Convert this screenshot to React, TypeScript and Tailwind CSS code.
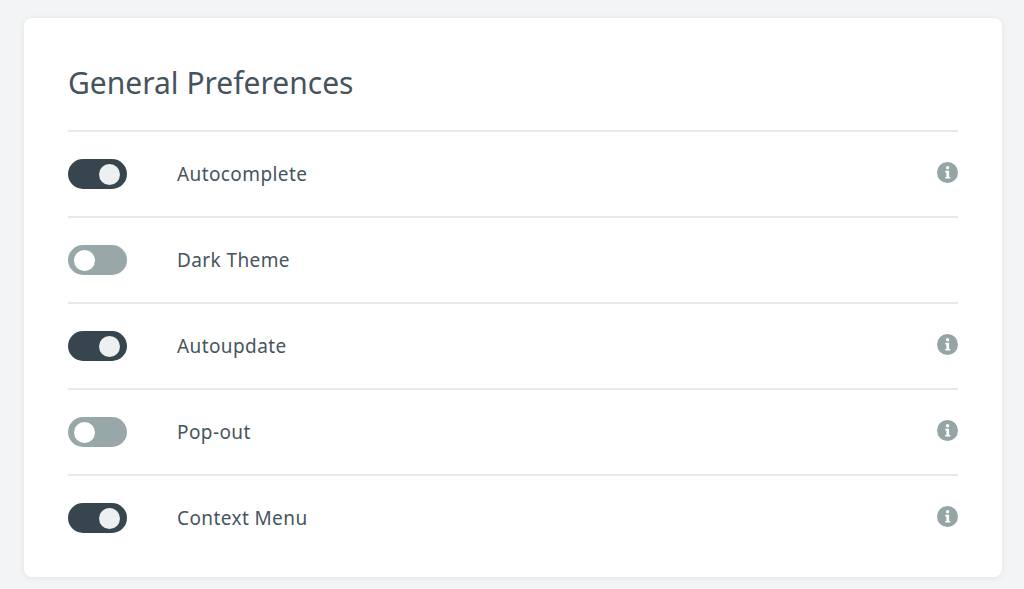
const rows = [
  { label: "Autocomplete", on: true, info: true },
  { label: "Dark Theme", on: false, info: false },
  { label: "Autoupdate", on: true, info: true },
  { label: "Pop-out", on: false, info: true },
  { label: "Context Menu", on: true, info: true },
];

function InfoIcon() {
  return (
    <svg width="21" height="21" viewBox="0 0 21 21" className="-mt-[4px]">
      <circle cx="10.5" cy="10.5" r="10.5" fill="#95a5a6" />
      <circle cx="10.6" cy="5.8" r="1.7" fill="#fff" />
      <path d="M8.2 8.7h3.9v6.2h1.2v1.7H8.2v-1.7h1.2v-4.5H8.2z" fill="#fff" />
    </svg>
  );
}

function Toggle({ on }: { on: boolean }) {
  return (
    <div
      className={`flex h-[30px] w-[59px] shrink-0 items-center rounded-full ${
        on ? "justify-end bg-[#37454e] pr-[7px]" : "justify-start bg-[#98a8a8] pl-[6px]"
      }`}
    >
      <div className={`h-[21px] w-[21px] rounded-full ${on ? "bg-[#ecf0f1]" : "bg-white"}`} />
    </div>
  );
}

export default function App() {
  return (
    <div className="h-[589px] overflow-hidden bg-[#f3f4f6] pt-[18px] pr-[22px] pl-[24px] font-['Noto_Sans',sans-serif]">
      <div className="h-[559px] rounded-lg bg-white px-[44px] shadow-[0_1px_6px_rgba(0,0,0,0.08)]">
        <h1 className="flex h-[112px] items-center pt-[16px] text-[30px] font-normal text-[#46535c]">
          General Preferences
        </h1>
        {rows.map((row) => (
          <div key={row.label} className="flex h-[86px] items-center border-t-2 border-[#e6e8ea]">
            <Toggle on={row.on} />
            <span className="ml-[50px] flex-1 text-[19px] tracking-[0.4px] text-[#47555e]">{row.label}</span>
            {row.info && <InfoIcon />}
          </div>
        ))}
      </div>
    </div>
  );
}
